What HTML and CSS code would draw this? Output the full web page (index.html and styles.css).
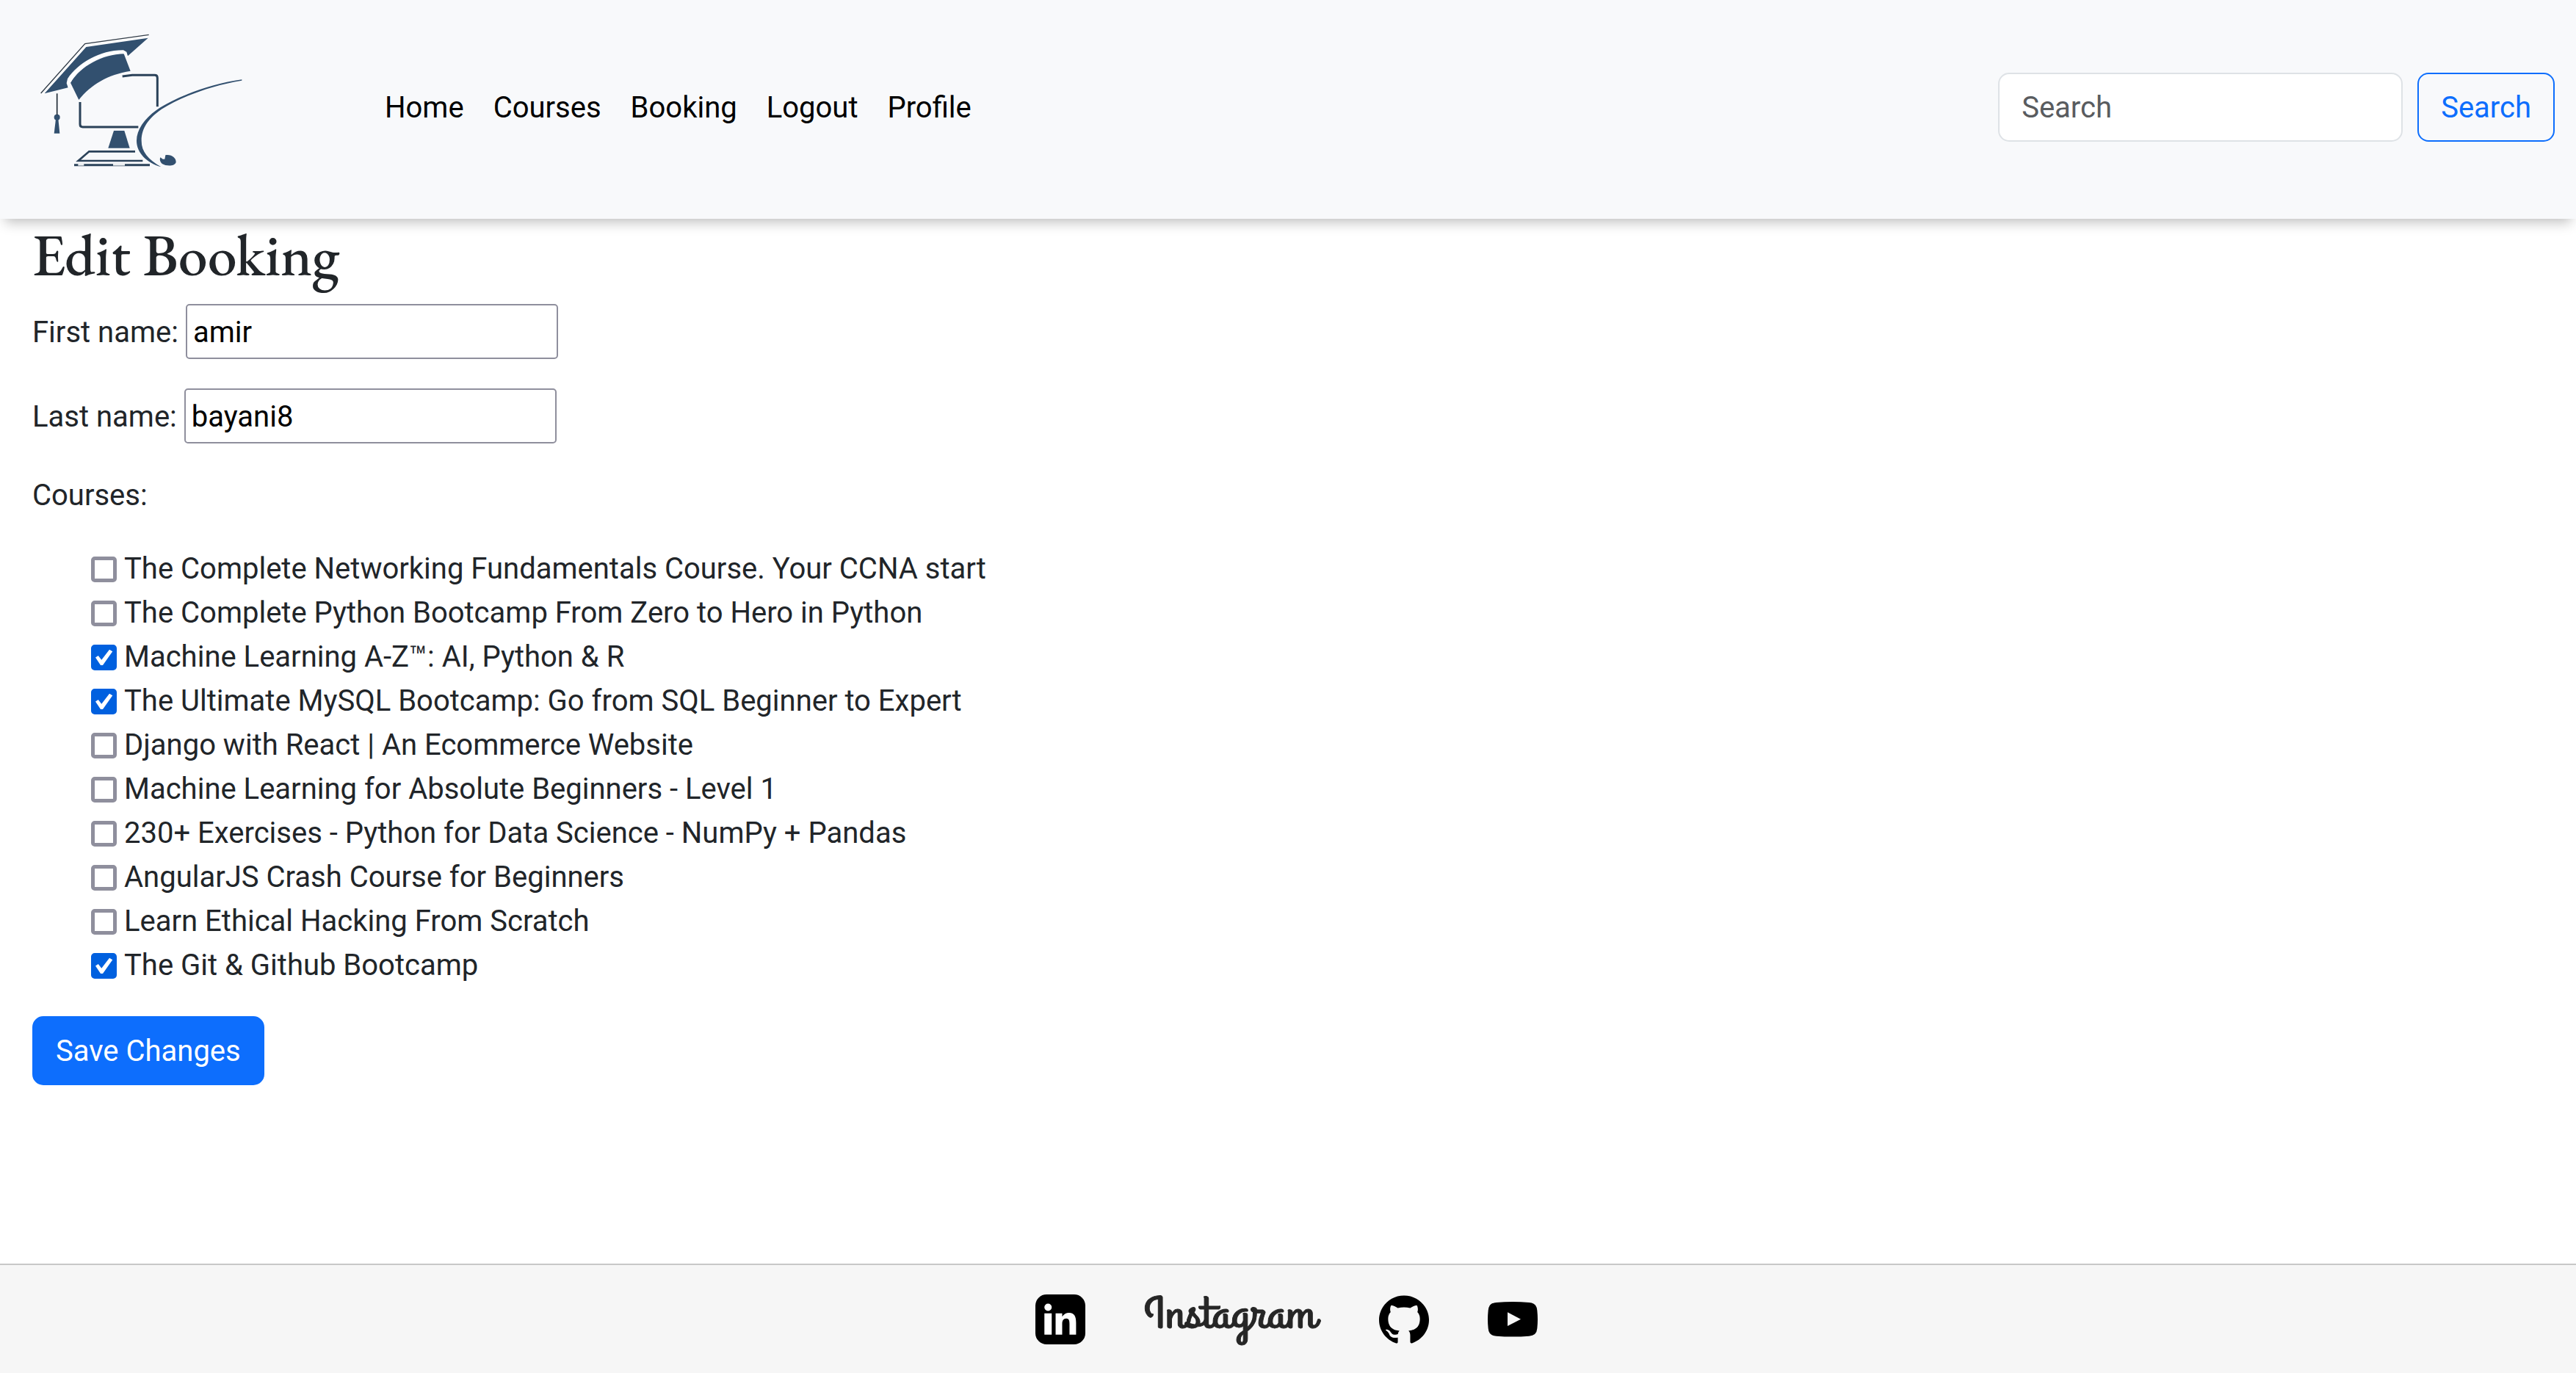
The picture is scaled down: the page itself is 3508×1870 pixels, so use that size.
FILE: index.html
```html
<!DOCTYPE html>
<html lang="en">
<head>
<meta charset="utf-8">
<title>Edit Booking</title>
<link rel="stylesheet" href="styles.css">
</head>
<body>
<header class="navbar">
  <a class="brand" href="#" aria-label="Home">
    <svg class="logo" viewBox="0 0 1200 894">
      <g fill="none" stroke="#fff" stroke-width="10">
        <path d="M174 386 351 185 604 148"/>
        <path d="M280 360 272 338C312 264 408 208 497 208Q512 208 516 218L522 232"/>
      </g>
      <g fill="#32506f">
        <path d="M352 192 605 155 522 229 517 212 504 205C410 204 318 258 276 322L272 340 278 358 182 382Z"/>
        <path d="M288 338C330 270 418 222 506 220L533 290C440 305 372 345 322 408Z"/>
        <path d="M465 534H508L530 605H442Z"/>
        <circle cx="233" cy="479" r="12"/>
        <path d="M228 486H238L244 545H221Z"/>
        <path d="M988 325C860 342 720 396 640 449C590 484 558 530 558 575C558 625 600 665 658 682C605 650 578 620 578 575C578 520 610 481 660 446C740 396 860 350 988 329Z"/>
        <path d="M655 643 665 650 673 650 676 634C700 630 720 645 719 663C714 680 680 680 662 669C654 662 651 652 655 643Z"/>
      </g>
      <path d="M280 342C318 268 412 214 504 214L514 220" fill="none" stroke="#fff" stroke-width="9"/>
      <g fill="none" stroke="#2b4259">
        <path d="M167 381 347 179 608 142" stroke="#333d48" stroke-width="4"/>
        <path d="M233 382V470" stroke="#1f2a35" stroke-width="5"/>
        <path d="M327 417V508Q327 519 338 519H565" stroke-width="9"/>
        <path d="M500 312 540 307H632Q643 307 643 318V436" stroke-width="9"/>
        <path d="M552 619H364L320 657H583" stroke-width="8"/>
        <path d="M303 674H612" stroke-width="9"/>
      </g>
      <path d="M319 673H343M462 673H510" stroke="#fff" stroke-width="7"/>
    </svg>
  </a>
  <nav class="links">
    <a href="#">Home</a>
    <a href="#">Courses</a>
    <a href="#">Booking</a>
    <a href="#">Logout</a>
    <a href="#">Profile</a>
  </nav>
  <form class="search">
    <input class="search-input" type="search" placeholder="Search" aria-label="Search">
    <button class="btn btn-outline" type="button">Search</button>
  </form>
</header>

<main class="content">
  <h2 class="title">Edit Booking</h2>
  <form>
    <div class="field">
      <label for="first">First name:</label>
      <input id="first" class="text-input" type="text" value="amir">
    </div>
    <div class="field">
      <label for="last">Last name:</label>
      <input id="last" class="text-input" type="text" value="bayani8">
    </div>
    <div class="courses-label">Courses:</div>
    <ul class="courses">
      <li><label><input type="checkbox">The Complete Networking Fundamentals Course. Your CCNA start</label></li>
      <li><label><input type="checkbox">The Complete Python Bootcamp From Zero to Hero in Python</label></li>
      <li><label><input type="checkbox" checked>Machine Learning A-Z™: AI, Python &amp; R</label></li>
      <li><label><input type="checkbox" checked>The Ultimate MySQL Bootcamp: Go from SQL Beginner to Expert</label></li>
      <li><label><input type="checkbox">Django with React | An Ecommerce Website</label></li>
      <li><label><input type="checkbox">Machine Learning for Absolute Beginners - Level 1</label></li>
      <li><label><input type="checkbox">230+ Exercises - Python for Data Science - NumPy + Pandas</label></li>
      <li><label><input type="checkbox">AngularJS Crash Course for Beginners</label></li>
      <li><label><input type="checkbox">Learn Ethical Hacking From Scratch</label></li>
      <li><label><input type="checkbox" checked>The Git &amp; Github Bootcamp</label></li>
    </ul>
    <button class="btn btn-primary" type="button">Save Changes</button>
  </form>
</main>

<footer class="footer">
  <a href="#" aria-label="LinkedIn">
    <svg class="icon" viewBox="0 0 205 205">
      <rect width="205" height="205" rx="46"/>
      <g fill="#fff">
        <circle cx="52" cy="53" r="15"/>
        <path d="M37 78H67V165H37ZM83 78H110V91C117 80 127 75 138 75 161 75 167 92 167 116V165H140V121C140 108 138 99 127 99 115 99 110 108 110 121V165H83Z"/>
      </g>
    </svg>
  </a>
  <a href="#" aria-label="Instagram">
    <svg class="wordmark" viewBox="0 0 240 68">
      <text x="0" y="44" textLength="234" lengthAdjust="spacingAndGlyphs">Instagram</text>
    </svg>
  </a>
  <a href="#" aria-label="GitHub">
    <svg class="icon" viewBox="0 0 24 24">
      <path d="M12 .5C5.370.5 0 5.780 0 12.290c0 5.200 3.440 9.620 8.200 11.180.6.110.82-.25.82-.56v-2.200c-3.340.71-4.040-1.420-4.040-1.420-.55-1.360-1.340-1.730-1.340-1.730-1.080-.73.090-.72.090-.72 1.200.080 1.840 1.220 1.840 1.220 1.070 1.800 2.810 1.280 3.500.98.100-.76.410-1.280.75-1.580-2.670-.3-5.470-1.310-5.470-5.830 0-1.290.46-2.340 1.230-3.160-.13-.3-.54-1.500.11-3.120 0 0 1.010-.32 3.300 1.210a11.700 11.700 0 0 1 6.010 0c2.290-1.530 3.300-1.210 3.300-1.210.65 1.620.24 2.820.12 3.120.77.82 1.230 1.870 1.230 3.160 0 4.530-2.810 5.530-5.480 5.820.43.36.81 1.080.81 2.180v3.240c0 .31.22.68.83.56C20.560 21.910 24 17.490 24 12.290 24 5.780 18.630.5 12 .5Z"/>
    </svg>
  </a>
  <a href="#" aria-label="YouTube">
    <svg class="icon" viewBox="0 0 204 204">
      <path d="M35 33Q102 27 169 33Q200 35 202 65Q206 102 202 139Q200 169 169 170Q102 175 35 170Q4 169 2 139Q-2 102 2 65Q4 35 35 33Z"/>
      <path d="M81 73 135 101 81 129Z" fill="#f6f6f6"/>
    </svg>
  </a>
</footer>
</body>
</html>
```
FILE: styles.css
```css
* { box-sizing: border-box; }

body {
  margin: 0;
  min-height: 1870px;
  display: flex;
  flex-direction: column;
  background: #fff;
  color: #212529;
  font: 400 40px/60px Roboto, sans-serif;
}

input, button { font: inherit; margin: 0; }

.navbar {
  display: flex;
  align-items: center;
  height: 298px;
  padding: 0 29px 6px 0;
  background: #f8f9fb;
  box-shadow: 0 12px 16px -7px rgba(0, 0, 0, .25);
}

.brand { align-self: flex-start; height: 292px; }
.logo { display: block; width: 400px; height: 298px; }

.links { display: flex; gap: 40px; margin-left: 124px; padding-top: 2px; }
.links a { color: #000; text-decoration: none; }

.search { display: flex; gap: 20px; margin-left: auto; }
.search-input {
  width: 551px;
  height: 94px;
  padding: 15px 30px;
  border: 2px solid #dee2e6;
  border-radius: 15px;
  background: #fff;
  appearance: none;
  outline: 0;
}
.search-input::placeholder { color: #595c5f; opacity: 1; }

.btn {
  height: 94px;
  padding: 16px 30px 14px;
  border: 2px solid #0d6efd;
  border-radius: 15px;
}
.btn-outline { background: transparent; color: #0d6efd; }
.btn-primary { display: block; background: #0d6efd; color: #fff; }

.content { flex: 1; padding: 0 44px; }

.title {
  margin: 0 0 20px;
  padding-top: 2px;
  font: 500 80px/94px "EB Garamond", "Liberation Serif", serif;
}

.field {
  display: flex;
  align-items: center;
  gap: 10px;
  height: 75px;
  margin-bottom: 40px;
}
.field label { padding-top: 2px; }
.text-input {
  width: 507px;
  height: 75px;
  padding: 3px 8px 1px;
  border: 2px solid #8f8f9d;
  border-radius: 5px;
  background: #fff;
  color: #000;
}

.courses-label { height: 60px; padding-top: 1px; }

.courses { margin: 40px 0; padding: 0 0 0 80px; list-style: none; }
.courses li { height: 60px; padding-top: 1px; }
.courses label { display: flex; align-items: flex-start; gap: 10px; }
.courses input {
  width: 35px;
  height: 35px;
  margin-top: 13px;
  border: 5px solid #8f8f9d;
  border-radius: 5px;
  background: #fff;
  appearance: none;
}
.courses input:checked {
  display: grid;
  place-items: center;
  border-color: #0060df;
  background: #0060df;
}
.courses input:checked::before {
  content: "";
  width: 25px;
  height: 25px;
  background: #fff;
  clip-path: polygon(4% 50%, 19% 40%, 37% 63%, 80% 7%, 97% 17%, 44% 92%, 32% 92%);
}

.footer {
  display: flex;
  justify-content: center;
  gap: 80px;
  height: 149px;
  padding: 40px 5px 0 0;
  border-top: 2px solid #c8c8c8;
  background: #f6f6f6;
}
.footer a { display: block; height: 68px; }
.icon { display: block; width: 68px; height: 68px; }
.wordmark {
  display: block;
  width: 240px;
  height: 68px;
  overflow: visible;
  fill: #262626;
  stroke: #262626;
  stroke-width: .8;
  font: 400 60px "Grand Hotel", cursive;
}
```
